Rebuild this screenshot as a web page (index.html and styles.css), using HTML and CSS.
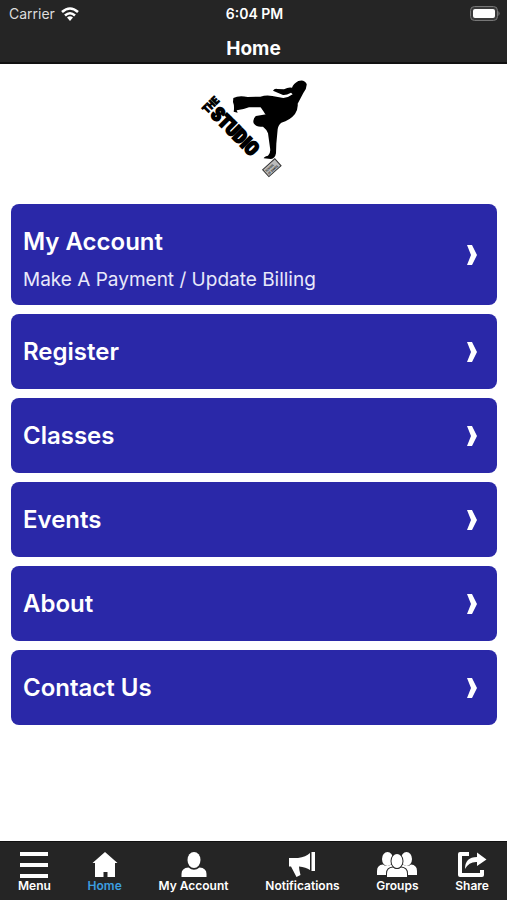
FILE: index.html
```html
<!DOCTYPE html>
<html lang="en">
<head>
    <meta charset="utf-8">
    <meta name="viewport" content="width=device-width, initial-scale=1">
    <title>Home</title>
    <link rel="stylesheet" href="styles.css">
</head>
<body>
    <header class="top-bar">
        <div class="status-bar">
            <div class="carrier">
                <span>Carrier</span>
                <svg class="wifi" viewBox="0 0 18 14" fill="none" stroke="#fff" stroke-width="2.600">
                    <path d="M1 5Q9-2 17 5"/>
                    <path d="M4 8.500Q9 4 14 8.500"/>
                    <path d="M6 10.600Q9 8 12 10.600L9 14z" fill="#fff" stroke="none"/>
                </svg>
            </div>
            <span class="clock">6:04 PM</span>
            <svg class="battery" viewBox="0 0 30 15">
                <rect x="0.500" y="0.500" width="27" height="14" rx="4" fill="#3a3a3a" stroke="#777"/>
                <rect x="3" y="3" width="22" height="9" rx="2" fill="#fff"/>
                <path d="M28.500 5q2 2.500 0 5z" fill="#888"/>
            </svg>
        </div>
        <h1>Home</h1>
    </header>

    <main>
        <svg class="logo" viewBox="0 0 393 345" role="img" aria-label="The Studio">
            <path d="M133 84Q150 75 176 81L214 80Q232 74 250 78L283 84Q300 82 311 73L306 68Q292 76 282 75L252 62Q256 55 265 57L285 58Q299 50 309 53Q313 41 328 33Q346 27 353 42Q354 55 343 69L326 101Q328 116 318 132Q303 151 277 158Q268 164 266 178L262 221L261 250Q258 266 246 267L224 265Q224 260 237 257Q246 249 243 233L237 190Q233 178 222 170Q202 173 194 160Q190 146 201 138L232 133L222 119L215 112L180 112Q160 120 143 121L146 128L134 125Q137 108 132 96z"/>
            <path d="M213 108Q230 102 262 108L245 136L230 134z"/>
            <text class="logo-the" transform="translate(54 132) rotate(-45)">THE</text>
            <text class="logo-studio" transform="translate(62 136) rotate(45)">STUDIO</text>
            <g transform="translate(221 299) rotate(-42)">
                <rect width="49" height="28" fill="#bbb" stroke="#333" stroke-width="3"/>
                <text class="logo-small" x="4" y="13">SCHOOL</text>
                <text class="logo-small" x="4" y="24">OF DANCE</text>
            </g>
        </svg>

        <nav class="card-list">
            <a class="card" href="#account">
                <span class="card-text">
                    <span class="card-title">My Account</span>
                    <span class="card-subtitle">Make A Payment / Update Billing</span>
                </span>
                <svg class="chevron" viewBox="0 0 10 20"><path d="M0 0h5l5 10-5 10H0l4-10z"/></svg>
            </a>
            <a class="card" href="#register">
                <span class="card-title">Register</span>
                <svg class="chevron" viewBox="0 0 10 20"><path d="M0 0h5l5 10-5 10H0l4-10z"/></svg>
            </a>
            <a class="card" href="#classes">
                <span class="card-title">Classes</span>
                <svg class="chevron" viewBox="0 0 10 20"><path d="M0 0h5l5 10-5 10H0l4-10z"/></svg>
            </a>
            <a class="card" href="#events">
                <span class="card-title">Events</span>
                <svg class="chevron" viewBox="0 0 10 20"><path d="M0 0h5l5 10-5 10H0l4-10z"/></svg>
            </a>
            <a class="card" href="#about">
                <span class="card-title">About</span>
                <svg class="chevron" viewBox="0 0 10 20"><path d="M0 0h5l5 10-5 10H0l4-10z"/></svg>
            </a>
            <a class="card" href="#contact">
                <span class="card-title">Contact Us</span>
                <svg class="chevron" viewBox="0 0 10 20"><path d="M0 0h5l5 10-5 10H0l4-10z"/></svg>
            </a>
        </nav>
    </main>

    <nav class="tab-bar">
        <button class="tab" type="button">
            <svg viewBox="0 0 40 26"><path d="M6 0h28v4H6zM6 11h28v4H6zM6 22h28v4H6z"/></svg>
            <span>Menu</span>
        </button>
        <a class="tab active" href="#home">
            <svg viewBox="0 0 40 26"><path d="M20 0l12.500 11H30v14h-7.500v-5h-4v5H10V11H7.500z"/></svg>
            <span>Home</span>
        </a>
        <a class="tab" href="#account">
            <svg viewBox="0 0 40 26">
                <ellipse cx="20" cy="8" rx="6.500" ry="8"/>
                <path d="M7.500 25v-3q0-6 7-6.500 5.500 4.500 11 0 7 .5 7 6.500v3z"/>
            </svg>
            <span>My Account</span>
        </a>
        <a class="tab" href="#notifications">
            <svg viewBox="0 0 40 26"><path d="M7 6h9q8-1 12-5v17q-4-3-11-3.500 0 3 1.500 8.500l-4 2L9 14.500H7zM29.500 0H33v19h-3.500z"/></svg>
            <span>Notifications</span>
        </a>
        <a class="tab" href="#groups">
            <svg viewBox="0 0 40 26">
                <ellipse cx="10.500" cy="7" rx="5.500" ry="7"/>
                <ellipse cx="29.500" cy="7" rx="5.500" ry="7"/>
                <path d="M0 23v-4q0-6 6-6.500 4 3 8 0 4 .5 4 5v5.500zM40 23v-4q0-6-6-6.500-4 3-8 0-4 .5-4 5v5.500z"/>
                <g stroke="#252525" stroke-width="2" paint-order="stroke">
                    <path d="M10 25v-3.500q0-5.500 6-6 4 3 8 0 6 .5 6 6V25z"/>
                    <ellipse cx="20" cy="9" rx="5.500" ry="7"/>
                </g>
            </svg>
            <span>Groups</span>
        </a>
        <button class="tab" type="button">
            <svg viewBox="0 0 40 26">
                <path d="M17 2H8v21h22v-5" fill="none" stroke="#fff" stroke-width="4" stroke-linejoin="round"/>
                <path d="M13 17q0-12 12-12V.5L34.500 7.500 25 14v-4q-8-.5-12 7z"/>
            </svg>
            <span>Share</span>
        </button>
    </nav>
</body>
</html>
```
FILE: styles.css
```css
* {
    box-sizing: border-box;
}

body {
    margin: 0;
    min-height: 100vh;
    display: flex;
    flex-direction: column;
    background-color: #fff;
    color: #fff;
    font-family: Inter, "Liberation Sans", sans-serif;
}

a {
    color: inherit;
    text-decoration: none;
}

.top-bar {
    background-color: #252525;
    border-bottom: 2px solid #111;
}

.status-bar {
    display: grid;
    grid-template-columns: 1fr auto 1fr;
    align-items: center;
    height: 27px;
    padding: 0 7px 0 9px;
    font-size: 14px;
}

.carrier {
    display: flex;
    align-items: center;
    gap: 6px;
    color: #ddd;
}

.wifi {
    width: 18px;
    height: 14px;
}

.clock {
    font-weight: 600;
}

.battery {
    justify-self: end;
    width: 30px;
    height: 15px;
}

h1 {
    margin: 0;
    padding: 10px 0 1px;
    font-size: 19px;
    line-height: 24px;
    font-weight: 700;
    text-align: center;
}

main {
    flex: 1;
    padding: 6px 10px 16px 11px;
}

.logo {
    display: block;
    width: 131px;
    height: 115px;
    margin: 0 auto 19px;
}

.logo-the,
.logo-studio,
.logo-small {
    font-family: "Liberation Sans Narrow", "Roboto Condensed", "Liberation Sans", sans-serif;
    font-weight: 700;
}

.logo-the {
    font-size: 33px;
    stroke: #000;
    stroke-width: 3px;
}

.logo-studio {
    font-size: 57px;
    stroke: #000;
    stroke-width: 6px;
}

.logo-small {
    font-size: 9px;
    fill: #333;
}

.card-list {
    display: flex;
    flex-direction: column;
    gap: 9px;
}

.card {
    display: flex;
    align-items: center;
    justify-content: space-between;
    min-height: 75px;
    padding: 10px 20px 10px 12px;
    border-radius: 8px;
    background-color: #2a28a8;
}

.card-text {
    display: flex;
    flex-direction: column;
    gap: 8px;
    padding-top: 13px;
}

.card-title {
    font-size: 24px;
    line-height: 30px;
    font-weight: 600;
}

.card-subtitle {
    font-size: 19px;
    line-height: 30px;
    color: #e8e8fa;
}

.chevron {
    width: 10px;
    height: 20px;
    fill: #fff;
}

.tab-bar {
    display: flex;
    justify-content: space-between;
    padding: 10px 18px 6px;
    border-top: 1px solid #111;
    background-color: #252525;
}

.tab {
    display: flex;
    flex-direction: column;
    align-items: center;
    padding: 0;
    border: 0;
    background: none;
    color: #fff;
    font-family: inherit;
    font-size: 12px;
    line-height: 16px;
    font-weight: 600;
    cursor: pointer;
}

.tab svg {
    width: 40px;
    height: 26px;
    margin: 0 -4px;
    fill: #fff;
}

.tab.active {
    color: #3c9fe0;
}
```
